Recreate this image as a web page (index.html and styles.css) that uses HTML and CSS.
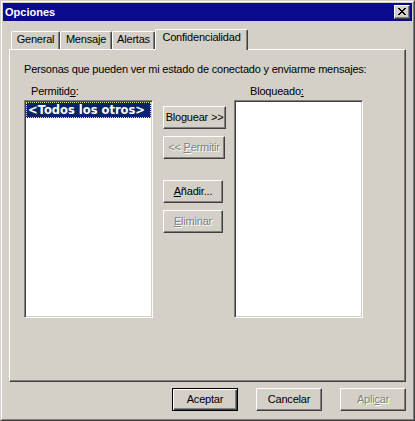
FILE: index.html
```html
<!DOCTYPE html>
<html lang="es">
<head>
<meta charset="utf-8">
<title>Opciones</title>
<link rel="stylesheet" href="styles.css">
</head>
<body>
<div class="window">
  <div class="frame">
    <div class="titlebar">
      <span class="title">Opciones</span>
      <button class="close" aria-label="Cerrar"><svg class="close-glyph" width="8" height="7" viewBox="0 0 8 7" shape-rendering="crispEdges"><path d="M0 0h2v1H0zM6 0h2v1H6zM1 1h2v1H1zM5 1h2v1H5zM2 2h4v1H2zM3 3h2v1H3zM2 4h4v1H2zM1 5h2v1H1zM5 5h2v1H5zM0 6h2v1H0zM6 6h2v1H6z" fill="#000"/></svg></button>
    </div>
    <div class="tabs">
      <div class="tab tab-general">General</div>
      <div class="tab tab-mensaje">Mensaje</div>
      <div class="tab tab-alertas">Alertas</div>
      <div class="tab tab-active">Confidencialidad</div>
    </div>
    <div class="panel">
      <p class="desc">Personas que pueden ver mi estado de conectado y enviarme mensajes:</p>
      <div class="lists">
        <div class="col">
          <div class="label label-left">Permitid<u>o</u>:</div>
          <div class="listbox"><div class="item">&lt;Todos los otros&gt;</div></div>
        </div>
        <div class="actions">
          <button class="btn btn-bloquear">Bloguear &gt;&gt;</button>
          <button class="btn btn-permitir disabled">&lt;&lt; <u>P</u>ermitir</button>
          <button class="btn btn-anadir"><u>A</u>ñadir...</button>
          <button class="btn btn-eliminar disabled"><u>E</u>liminar</button>
        </div>
        <div class="col col-right">
          <div class="label label-right">Bloqueado<u>:</u></div>
          <div class="listbox"></div>
        </div>
      </div>
    </div>
    <div class="footer">
      <button class="btn btn-footer btn-default">Aceptar</button>
      <button class="btn btn-footer">Cancelar</button>
      <button class="btn btn-footer disabled">Apli<u>c</u>ar</button>
    </div>
  </div>
</div>
</body>
</html>
```
FILE: styles.css
```css
* { box-sizing: border-box; }

html, body {
  margin: 0;
  padding: 0;
  background: #d4d0c8;
}

body {
  font-family: "Liberation Sans", Arial, sans-serif;
  font-size: 11px;
  letter-spacing: -0.2px;
  line-height: 13px;
  color: #000;
}

.window {
  width: 415px;
  height: 421px;
  border: 1px solid;
  border-color: #d4d0c8 #404040 #404040 #d4d0c8;
  background: #d4d0c8;
}

.frame {
  height: 100%;
  border: 1px solid;
  border-color: #ffffff #808080 #808080 #ffffff;
  padding: 1px;
  display: flex;
  flex-direction: column;
}

.titlebar {
  height: 18px;
  background: #0a0a8c;
  display: flex;
  align-items: center;
  justify-content: space-between;
  padding: 0 2px 0 2px;
}

.title {
  color: #fff;
  font-weight: bold;
  font-size: 11px;
  letter-spacing: 0;
}

.close {
  width: 16px;
  height: 14px;
  padding: 2px 0 0 0;
  margin: 0;
  background: #d4d0c8;
  border: 1px solid;
  border-color: #ffffff #404040 #404040 #ffffff;
  box-shadow: inset -1px -1px 0 #808080;
  display: flex;
  justify-content: center;
  align-items: flex-start;
}

.close-glyph { display: block; }

.tabs {
  margin: 8px 0 0 8px;
  height: 20px;
  display: flex;
  align-items: flex-end;
}

.tab {
  height: 18px;
  padding-top: 1px;
  text-align: center;
  border-top: 1px solid #fff;
  border-left: 1px solid #fff;
  border-right: 1px solid #404040;
  border-radius: 2px 2px 0 0;
  box-shadow: inset -1px 0 0 #808080;
  white-space: nowrap;
}

.tab-general { width: 49px; }
.tab-mensaje { width: 52px; }
.tab-alertas { width: 43px; }

.tab-active {
  width: 93px;
  height: 21px;
  margin-bottom: -1px;
  position: relative;
  z-index: 1;
  background: #d4d0c8;
}

.panel {
  margin: 0 6px;
  height: 333px;
  border: 1px solid;
  border-color: #ffffff #404040 #404040 #ffffff;
  box-shadow: inset -1px -1px 0 #808080;
  padding: 13px 0 0 14px;
}

.desc {
  margin: 0;
  white-space: nowrap;
}

.lists {
  margin-top: 9px;
  display: flex;
  align-items: flex-start;
}

.col {
  width: 129px;
  display: flex;
  flex-direction: column;
}

.col-right { margin-left: 8px; }

.label { height: 13px; white-space: nowrap; }
.label-left { padding-left: 7px; }
.label-right { padding-left: 16px; }

.listbox {
  margin-top: 2px;
  height: 218px;
  background: #fff;
  border: 1px solid;
  border-color: #808080 #ffffff #ffffff #808080;
  box-shadow: inset 1px 1px 0 #404040, inset -1px -1px 0 #d4d0c8;
  padding: 1px;
}

.item {
  height: 16px;
  background: #0a246a;
  border: 1px dotted #f5db95;
  color: #fff;
  font-family: "DejaVu Sans", sans-serif;
  font-weight: bold;
  font-size: 11.5px;
  letter-spacing: 0;
  line-height: 14px;
  padding-left: 1px;
  white-space: nowrap;
}

.actions {
  margin-left: 10px;
  width: 63px;
  padding-top: 21px;
  display: flex;
  flex-direction: column;
  align-items: flex-start;
}

.btn {
  height: 23px;
  margin: 0;
  padding: 0;
  background: #d4d0c8;
  border: 1px solid;
  border-color: #ffffff #404040 #404040 #ffffff;
  box-shadow: inset -1px -1px 0 #808080;
  font: inherit;
  letter-spacing: inherit;
  color: #000;
  text-align: center;
  white-space: nowrap;
}

.btn-bloquear { width: 63px; }
.btn-permitir { width: 62px; margin-top: 7px; }
.btn-anadir { width: 60px; margin-top: 21px; }
.btn-eliminar { width: 60px; margin-top: 7px; }

.disabled {
  color: #808080;
  text-shadow: 1px 1px 0 #ffffff;
}

.footer {
  margin-top: 6px;
  padding-right: 6px;
  display: flex;
  justify-content: flex-end;
  gap: 18px;
}

.btn-footer { width: 66px; }

.btn-default {
  border-color: #000;
  box-shadow: inset 1px 1px 0 #ffffff, inset -1px -1px 0 #404040, inset -2px -2px 0 #808080;
}
```
